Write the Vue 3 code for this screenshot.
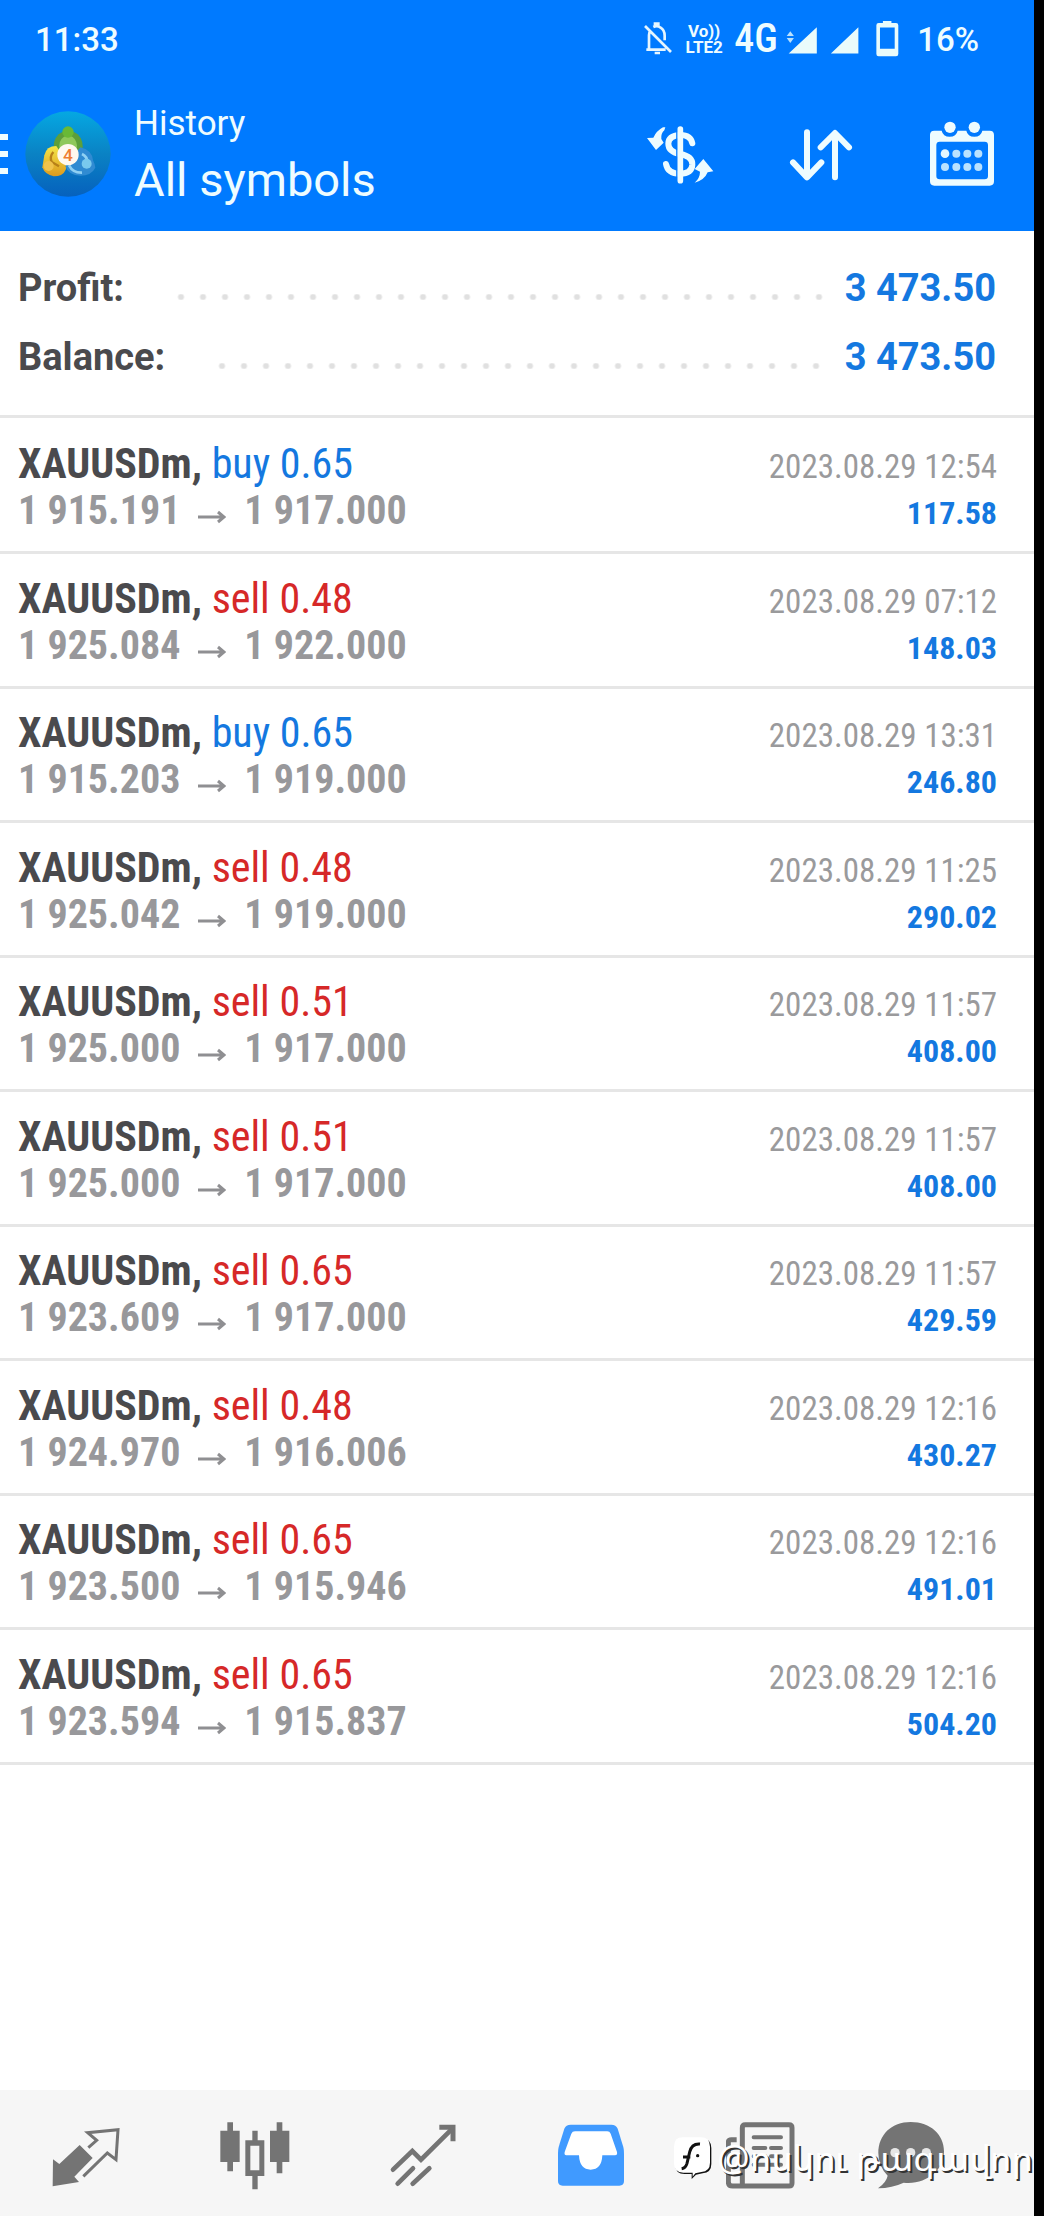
<script setup>
const deals = [
  { side: 'buy', volume: '0.65', open: '1 915.191', close: '1 917.000', time: '2023.08.29 12:54', profit: '117.58' },
  { side: 'sell', volume: '0.48', open: '1 925.084', close: '1 922.000', time: '2023.08.29 07:12', profit: '148.03' },
  { side: 'buy', volume: '0.65', open: '1 915.203', close: '1 919.000', time: '2023.08.29 13:31', profit: '246.80' },
  { side: 'sell', volume: '0.48', open: '1 925.042', close: '1 919.000', time: '2023.08.29 11:25', profit: '290.02' },
  { side: 'sell', volume: '0.51', open: '1 925.000', close: '1 917.000', time: '2023.08.29 11:57', profit: '408.00' },
  { side: 'sell', volume: '0.51', open: '1 925.000', close: '1 917.000', time: '2023.08.29 11:57', profit: '408.00' },
  { side: 'sell', volume: '0.65', open: '1 923.609', close: '1 917.000', time: '2023.08.29 11:57', profit: '429.59' },
  { side: 'sell', volume: '0.48', open: '1 924.970', close: '1 916.006', time: '2023.08.29 12:16', profit: '430.27' },
  { side: 'sell', volume: '0.65', open: '1 923.500', close: '1 915.946', time: '2023.08.29 12:16', profit: '491.01' },
  { side: 'sell', volume: '0.65', open: '1 923.594', close: '1 915.837', time: '2023.08.29 12:16', profit: '504.20' },
]
const totals = [
  { label: 'Profit:', value: '3 473.50' },
  { label: 'Balance:', value: '3 473.50' },
]
</script>

<template>
  <div class="phone">
    <header class="top">
      <div class="status">
        <span class="clock">11:33</span>
        <div class="indicators">
          <svg class="bell" viewBox="70 66 90 100" fill="none" stroke="#e6f6ff" stroke-width="8">
            <path d="M80 148h58M88 146v-42q0-8 5-14M101 80q12-6 22 2q12 8 12 24v14M76 77l78 78" />
            <path d="M106 76v-6h10v6M105 158h16" />
          </svg>
          <span class="volte"><span>Vo))</span><span>LTE2</span></span>
          <span class="net">4G</span>
          <svg class="signals" viewBox="500 60 345 110" fill="#e9fbfb">
            <path d="M508 159l86-80v80zM637 159l84-80v80z" />
            <path d="M502 106l11-15 11 15zM502 112l11 15 11-15z" opacity=".8" />
            <path fill-rule="evenodd" d="M796 66v-6h26v6h14q7 0 7 7v88q0 7-7 7h-53q-7 0-7-7v-88q0-7 7-7zM787 80v65h45v-65z" />
          </svg>
          <span class="percent">16%</span>
        </div>
      </div>
      <div class="bar">
        <button class="menu" aria-label="Menu"><i></i><i></i><i></i></button>
        <svg class="logo" viewBox="74 331 258 258">
          <defs>
            <linearGradient id="disc" x1="0" y1="0" x2="0" y2="1">
              <stop offset="0" stop-color="#05a8e2" /><stop offset=".5" stop-color="#0a82c4" /><stop offset="1" stop-color="#0661bd" />
            </linearGradient>
            <linearGradient id="gold" x1="0" y1="0" x2="0" y2="1">
              <stop offset="0" stop-color="#f4e646" /><stop offset="1" stop-color="#dc9a1e" />
            </linearGradient>
          </defs>
          <circle cx="203" cy="460" r="128" fill="url(#disc)" />
          <path d="M162 455q-8-34 13-54q28-23 57 0q21 20 13 54z" fill="#5d9f3a" />
          <path d="M178 448q-5-28 12-39q14-7 27 0q17 13 12 39z" fill="#8fc85a" />
          <circle cx="203" cy="394" r="17" fill="#69b936" />
          <path d="M168 436q-30 0-36 28l-6 36q8 22 34 27q28 0 36-20l5-20z" fill="url(#gold)" />
          <path d="M159 454q-12 14-5 30l22 13" fill="none" stroke="#b78018" stroke-width="7" />
          <circle cx="145" cy="496" r="15" fill="#f0c34c" />
          <path d="M240 440q35 8 38 39q7 14 7 22q-12 24-45 24q-35 0-45-28l14-18z" fill="#308bd2" />
          <path d="M206 494q12 23 39 22M245 460q16 8 15 23" fill="none" stroke="#8fd0f3" stroke-width="8" />
          <circle cx="259" cy="489" r="15" fill="#79c9ee" />
          <circle cx="203" cy="462" r="32" fill="#fff8ef" />
          <text class="four" x="203" y="480" text-anchor="middle">4</text>
        </svg>
        <div class="titles">
          <span class="sub">History</span>
          <h1>All symbols</h1>
        </div>
        <div class="actions">
          <button aria-label="Currency">
            <svg viewBox="72 355 210 210">
              <path d="M214 428q-5-25-36-25q-36 2-36 26q0 24 35 31q38 7 37 32q-2 27-37 27q-37 0-42-29" fill="none" stroke="#eefcff" stroke-width="18" stroke-linecap="round" />
              <path d="M168 390v156" stroke="#007aff" stroke-width="5" />
              <path d="M178 385v155" stroke="#eefcff" stroke-width="17" stroke-linecap="round" />
              <path d="M133 380l-3 9q-11 10-9 26l7 11-23 22-27-36 19-1q9-20 29-31zM221 546q16-14 16-33l-16-8 26-30 30 37-17 3q-10 24-39 31z" fill="#eefcff" />
            </svg>
          </button>
          <button aria-label="Sort">
            <svg viewBox="498 355 210 210" fill="none" stroke="#eefcff" stroke-width="18" stroke-linecap="round" stroke-linejoin="round">
              <path d="M561 395v132M519 485l42 45 43-45M645 530V398M602 440l43-43 42 43" />
            </svg>
          </button>
          <button aria-label="Period">
            <svg viewBox="920 355 210 210">
              <path fill="#eefcff" fill-rule="evenodd" d="M942 390h22q4 18 24 18t24-18h26q4 18 24 18t24-18h22q13 0 13 13v139q0 13-13 13H942q-13 0-13-13V403q0-13 13-13zM958 423q-10 0-10 10v93q0 10 10 10h135q10 0 10-10v-93q0-10-10-10z" />
              <g fill="#eefcff"><circle cx="989" cy="380" r="17" /><circle cx="1062" cy="380" r="17" /></g>
              <g fill="#b9e2ff">
                <circle cx="974" cy="459" r="13" fill="#e4f7ff" /><circle cx="1008" cy="459" r="12" /><circle cx="1041" cy="459" r="12" /><circle cx="1074" cy="459" r="12" />
                <circle cx="974" cy="499" r="12" /><circle cx="1008" cy="499" r="12" /><circle cx="1041" cy="499" r="12" /><circle cx="1074" cy="499" r="12" />
              </g>
            </svg>
          </button>
        </div>
      </div>
    </header>

    <main>
      <dl class="totals">
        <div v-for="t in totals" :key="t.label" class="total">
          <dt>{{ t.label }}</dt>
          <span class="dots"></span>
          <dd>{{ t.value }}</dd>
        </div>
      </dl>
      <ul class="deals">
        <li v-for="(d, i) in deals" :key="i" class="deal">
          <div class="line">
            <span class="name"><b>XAUUSDm,</b> <span :class="d.side">{{ d.side }} {{ d.volume }}</span></span>
            <time>{{ d.time }}</time>
          </div>
          <div class="line">
            <span class="prices">
              <span>{{ d.open }}</span>
              <svg class="arrow" viewBox="0 0 28 14" fill="none" stroke="#8f8f92" stroke-width="3"><path d="M0 7h26M20 2l6 5-6 5" /></svg>
              <span>{{ d.close }}</span>
            </span>
            <span class="profit">{{ d.profit }}</span>
          </div>
        </li>
      </ul>
    </main>

    <nav class="tabs">
      <button aria-label="Quotes">
        <svg viewBox="154 126 210 210">
          <path d="M160 241l19 14 61-57 39 39-55 56 14 16-79 13z" fill="#747474" />
          <path d="M266 206l25-22-27-23 91-9-6 90-26-20-72 70" fill="none" stroke="#747474" stroke-width="9" />
        </svg>
      </button>
      <button aria-label="Charts">
        <svg viewBox="659 126 210 210">
          <path fill="#747474" d="M681 130h17v25h20v94h-20v28h-17v-28h-21v-94h21zM829 130h17v25h21v94h-21v34h-17v-34h-20v-94h20z" />
          <path fill="#747474" fill-rule="evenodd" d="M756 155h16v29h20v107h-20v40h-16v-40h-21V184h21zM750 200v74h27v-74z" />
        </svg>
      </button>
      <button aria-label="Trade">
        <svg viewBox="115 126 210 210" fill="none" stroke="#747474" stroke-width="14">
          <path stroke-linecap="round" d="M127 272l58-56 26 26 94-93M141 314l46-46M186 314l50-46" />
          <path d="M266 145h41v42" stroke-width="15" />
        </svg>
      </button>
      <button aria-label="History">
        <svg viewBox="622 126 210 210">
          <path d="M663 137h122q14 0 19 12l17 55q2 8 2 20v82q0 14-14 14H639q-14 0-14-14v-82q0-12 2-20l17-55q5-12 19-12z" fill="#409aff" />
          <path d="M676 157h97q7 0 10 7l19 55q2 10-6 10h-38q-2 43-35 43t-35-43h-38q-7 0-5-10l20-55q3-7 11-7z" fill="#fff" />
        </svg>
      </button>
      <button aria-label="News">
        <svg viewBox="199 126 210 210" fill="none" stroke="#747474" stroke-width="15">
          <path d="M248 322V146q0-9 9-9h131q9 0 9 9v166q0 9-9 9H219q-13 0-13-13V190q0-8 9-8h16" />
          <path d="M282 175h82M282 207h35M334 207h30M282 232h35M334 232h30M282 257h82" stroke-width="12" stroke-linecap="round" />
        </svg>
      </button>
      <button aria-label="Messages">
        <svg viewBox="648 126 210 210">
          <path d="M752 129c60 0 100 38 100 88c0 58-54 101-121 94q-34 16-77 17q25-18 29-38q-28-28-28-68c0-55 40-93 97-93z" fill="#747474" />
          <g fill="#e6e6e6"><circle cx="705" cy="221" r="14" /><circle cx="752" cy="221" r="14" /><circle cx="799" cy="221" r="14" /></g>
        </svg>
      </button>
      <div class="watermark">
        <svg viewBox="45 176 120 132">
          <path d="M76 184h56q28 0 28 28v48q0 26-26 28l-20 4-13 13v-15H80q-28 0-28-28v-50q0-28 24-28z" fill="#111" />
          <path d="M74 180h54q28 0 28 28v48q0 26-26 28l-18 4-8 10v-12H76q-28 0-28-28v-50q0-28 26-28z" fill="#fff" />
          <path d="M126 200q-25-2-31 24l-8 34q-4 14-16 16M75 239h22" fill="none" stroke="#111" stroke-width="9" />
          <circle cx="119" cy="235" r="5" fill="#111" />
        </svg>
        <span>@ոսկու թագավոր</span>
      </div>
    </nav>
  </div>
</template>

<style>
body { margin: 0; background: #fff; }
</style>

<style scoped>
.phone {
  box-sizing: border-box;
  min-height: 100vh;
  display: flex;
  flex-direction: column;
  border-right: 10px solid #000;
  background: #fff;
  font-family: Roboto, "Liberation Sans", sans-serif;
  overflow: hidden;
}
button { border: 0; padding: 0; background: none; display: flex; align-items: center; justify-content: center; }
svg { display: block; flex: none; }
.top { background: #007aff; color: #eefcff; padding-bottom: 1px; }
.status { height: 78px; display: flex; align-items: center; justify-content: space-between; padding: 0 55px 0 35px; font-size: 33px; font-weight: 500; }
.indicators { display: flex; align-items: center; }
.bell { width: 30px; height: 34px; }
.volte { display: flex; flex-direction: column; margin: 0 10px 0 11px; width: 40px; font-size: 17px; line-height: 16px; font-weight: 700; text-align: center; }
.net { font-family: "Roboto Condensed", Roboto, sans-serif; font-size: 40px; font-weight: 500; line-height: 48px; margin-right: 9px; width: 42px; }
.signals { width: 115px; height: 36px; }
.percent { margin-left: 17px; }
.bar { height: 152px; display: flex; align-items: center; }
.menu { width: 8px; height: 40px; flex-direction: column; justify-content: space-between; align-items: stretch; }
.menu i { height: 6px; background: #eefcff; }
.logo { width: 86px; height: 86px; margin-left: 17px; }
.four { font-size: 52px; font-weight: 500; fill: #ee7d32; }
.titles { margin-left: 23px; padding-top: 4px; flex: 1; }
.sub { display: block; font-size: 35px; line-height: 48px; }
h1 { margin: 0; font-size: 47px; font-weight: 400; line-height: 64px; }
.actions { display: flex; gap: 71px; margin-right: 37px; }
.actions svg { width: 70px; height: 70px; }

.totals { margin: 0; padding: 23px 38px 23px 18px; border-bottom: 3px solid #e6e6e6; font-size: 38px; line-height: 69px; font-weight: 700; }
.total { display: flex; align-items: center; }
dt { color: #4a4a4d; }
dd { margin: 0; color: #1478e0; }
.dots { flex: 1; height: 6px; margin: 16px 22px 0 46px; background: radial-gradient(circle at 11px 3px, #e0e0e0 2px, transparent 4px) 0 0 / 22px 6px repeat-x; }

.deals { list-style: none; margin: 0; padding: 2px 0 0; font-family: "Roboto Condensed", "Liberation Sans Narrow", Roboto, sans-serif; }
.deal { padding: 20px 37px 17px 18px; border-bottom: 3px solid #e6e6e6; }
.deal:nth-child(even) { padding-top: 21px; }
.line { display: flex; justify-content: space-between; align-items: baseline; height: 47px; line-height: 47px; white-space: nowrap; }
.name { font-size: 42px; }
.name b { color: #4a4a4d; font-weight: 700; }
.buy { color: #1478e0; }
.sell { color: #d62828; }
.prices { display: flex; align-items: baseline; font-size: 40px; color: #98989b; font-weight: 700; }
.arrow { width: 28px; height: 14px; margin: 0 18px; }
time { font-size: 33px; color: #9a9a9c; }
.profit { font-size: 32px; font-weight: 700; color: #1478e0; }

.tabs { position: relative; margin-top: auto; height: 126px; display: flex; padding: 0 57px 0 2px; background: #f6f6f6; }
.tabs button { flex: 169 1 0; padding-top: 6px; }
.tabs button:nth-of-type(6) { flex-grow: 132; }
.tabs svg { width: 70px; height: 70px; }
.watermark { position: absolute; right: 1px; bottom: 31px; display: flex; align-items: center; color: #fff; font-family: "Noto Sans", "Noto Sans Armenian", "DejaVu Sans", sans-serif; font-size: 36px; line-height: 54px; white-space: nowrap; text-shadow: 2px 2px 0 #333; }
.tabs .watermark svg { width: 40px; height: 44px; margin-right: 4px; }
</style>
